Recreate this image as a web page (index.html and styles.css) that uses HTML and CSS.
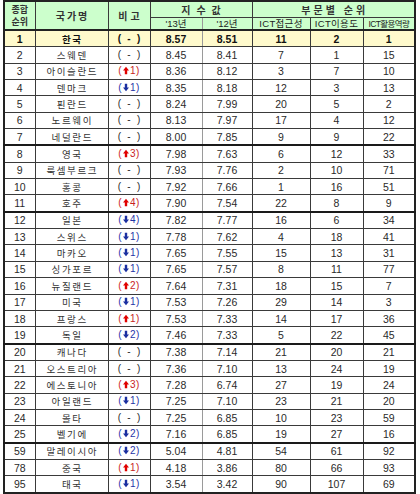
FILE: index.html
```html
<!DOCTYPE html>
<html lang="ko">
<head>
<meta charset="utf-8">
<title>ICT 발전지수 순위</title>
<link rel="stylesheet" href="styles.css">
</head>
<body>
<div class="wrap">
<table class="rank">
<colgroup>
<col class="w-rank"><col class="w-name"><col class="w-note"><col class="w-13"><col class="w-12"><col class="w-a"><col class="w-b"><col class="w-c">
</colgroup>
<thead>
<tr class="h1">
<th rowspan="2" class="hr"><div class="two">종합</div><div class="two">순위</div></th>
<th rowspan="2" class="hn">국가명</th>
<th rowspan="2" class="hb">비고</th>
<th colspan="2" class="hx">지수값</th>
<th colspan="3" class="hs">부문별 순위</th>
</tr>
<tr class="h2">
<th class="sub c13">'13년</th>
<th class="sub">'12년</th>
<th class="sub ict">ICT접근성</th>
<th class="sub ict">ICT이용도</th>
<th class="sub ict sq">ICT활용역량</th>
</tr>
</thead>
<tbody>
<tr class="top"><td>1</td><td class="nm">한국</td><td class="nt eq">( - )</td><td class="c13">8.57</td><td>8.51</td><td>11</td><td>2</td><td>1</td></tr>
<tr><td>2</td><td class="nm">스웨덴</td><td class="nt eq">( - )</td><td class="c13">8.45</td><td>8.41</td><td>7</td><td>1</td><td>15</td></tr>
<tr><td>3</td><td class="nm">아이슬란드</td><td class="nt up">(<svg class="ar" viewBox="0 0 8 10"><path d="M4 0L8 5H5.6V10H2.4V5H0Z"/></svg>1)</td><td class="c13">8.36</td><td>8.12</td><td>3</td><td>7</td><td>10</td></tr>
<tr><td>4</td><td class="nm">덴마크</td><td class="nt dn">(<svg class="ar" viewBox="0 0 8 10"><path d="M4 10L8 5H5.6V0H2.4V5H0Z"/></svg>1)</td><td class="c13">8.35</td><td>8.18</td><td>12</td><td>3</td><td>13</td></tr>
<tr><td>5</td><td class="nm">핀란드</td><td class="nt eq">( - )</td><td class="c13">8.24</td><td>7.99</td><td>20</td><td>5</td><td>2</td></tr>
<tr><td>6</td><td class="nm">노르웨이</td><td class="nt eq">( - )</td><td class="c13">8.13</td><td>7.97</td><td>17</td><td>4</td><td>12</td></tr>
<tr class="sep"><td>7</td><td class="nm">네덜란드</td><td class="nt eq">( - )</td><td class="c13">8.00</td><td>7.85</td><td>9</td><td>9</td><td>22</td></tr>
<tr><td>8</td><td class="nm">영국</td><td class="nt up">(<svg class="ar" viewBox="0 0 8 10"><path d="M4 0L8 5H5.6V10H2.4V5H0Z"/></svg>3)</td><td class="c13">7.98</td><td>7.63</td><td>6</td><td>12</td><td>33</td></tr>
<tr><td>9</td><td class="nm">룩셈부르크</td><td class="nt eq">( - )</td><td class="c13">7.93</td><td>7.76</td><td>2</td><td>10</td><td>71</td></tr>
<tr><td>10</td><td class="nm">홍콩</td><td class="nt eq">( - )</td><td class="c13">7.92</td><td>7.66</td><td>1</td><td>16</td><td>51</td></tr>
<tr class="sep"><td>11</td><td class="nm">호주</td><td class="nt up">(<svg class="ar" viewBox="0 0 8 10"><path d="M4 0L8 5H5.6V10H2.4V5H0Z"/></svg>4)</td><td class="c13">7.90</td><td>7.54</td><td>22</td><td>8</td><td>9</td></tr>
<tr><td>12</td><td class="nm">일본</td><td class="nt dn">(<svg class="ar" viewBox="0 0 8 10"><path d="M4 10L8 5H5.6V0H2.4V5H0Z"/></svg>4)</td><td class="c13">7.82</td><td>7.77</td><td>16</td><td>6</td><td>34</td></tr>
<tr><td>13</td><td class="nm">스위스</td><td class="nt dn">(<svg class="ar" viewBox="0 0 8 10"><path d="M4 10L8 5H5.6V0H2.4V5H0Z"/></svg>1)</td><td class="c13">7.78</td><td>7.62</td><td>4</td><td>18</td><td>41</td></tr>
<tr><td>14</td><td class="nm">마카오</td><td class="nt dn">(<svg class="ar" viewBox="0 0 8 10"><path d="M4 10L8 5H5.6V0H2.4V5H0Z"/></svg>1)</td><td class="c13">7.65</td><td>7.55</td><td>15</td><td>13</td><td>31</td></tr>
<tr><td>15</td><td class="nm">싱가포르</td><td class="nt dn">(<svg class="ar" viewBox="0 0 8 10"><path d="M4 10L8 5H5.6V0H2.4V5H0Z"/></svg>1)</td><td class="c13">7.65</td><td>7.57</td><td>8</td><td>11</td><td>77</td></tr>
<tr><td>16</td><td class="nm">뉴질랜드</td><td class="nt up">(<svg class="ar" viewBox="0 0 8 10"><path d="M4 0L8 5H5.6V10H2.4V5H0Z"/></svg>2)</td><td class="c13">7.64</td><td>7.31</td><td>18</td><td>15</td><td>7</td></tr>
<tr><td>17</td><td class="nm">미국</td><td class="nt dn">(<svg class="ar" viewBox="0 0 8 10"><path d="M4 10L8 5H5.6V0H2.4V5H0Z"/></svg>1)</td><td class="c13">7.53</td><td>7.26</td><td>29</td><td>14</td><td>3</td></tr>
<tr><td>18</td><td class="nm">프랑스</td><td class="nt up">(<svg class="ar" viewBox="0 0 8 10"><path d="M4 0L8 5H5.6V10H2.4V5H0Z"/></svg>1)</td><td class="c13">7.53</td><td>7.33</td><td>14</td><td>17</td><td>36</td></tr>
<tr class="sep"><td>19</td><td class="nm">독일</td><td class="nt dn">(<svg class="ar" viewBox="0 0 8 10"><path d="M4 10L8 5H5.6V0H2.4V5H0Z"/></svg>2)</td><td class="c13">7.46</td><td>7.33</td><td>5</td><td>22</td><td>45</td></tr>
<tr><td>20</td><td class="nm">캐나다</td><td class="nt eq">( - )</td><td class="c13">7.38</td><td>7.14</td><td>21</td><td>20</td><td>21</td></tr>
<tr><td>21</td><td class="nm">오스트리아</td><td class="nt eq">( - )</td><td class="c13">7.36</td><td>7.10</td><td>13</td><td>24</td><td>19</td></tr>
<tr><td>22</td><td class="nm">에스토니아</td><td class="nt up">(<svg class="ar" viewBox="0 0 8 10"><path d="M4 0L8 5H5.6V10H2.4V5H0Z"/></svg>3)</td><td class="c13">7.28</td><td>6.74</td><td>27</td><td>19</td><td>24</td></tr>
<tr><td>23</td><td class="nm">아일랜드</td><td class="nt dn">(<svg class="ar" viewBox="0 0 8 10"><path d="M4 10L8 5H5.6V0H2.4V5H0Z"/></svg>1)</td><td class="c13">7.25</td><td>7.10</td><td>23</td><td>21</td><td>20</td></tr>
<tr><td>24</td><td class="nm">몰타</td><td class="nt eq">( - )</td><td class="c13">7.25</td><td>6.85</td><td>10</td><td>23</td><td>59</td></tr>
<tr class="sep"><td>25</td><td class="nm">벨기에</td><td class="nt dn">(<svg class="ar" viewBox="0 0 8 10"><path d="M4 10L8 5H5.6V0H2.4V5H0Z"/></svg>2)</td><td class="c13">7.16</td><td>6.85</td><td>19</td><td>27</td><td>16</td></tr>
<tr><td>59</td><td class="nm">말레이시아</td><td class="nt dn">(<svg class="ar" viewBox="0 0 8 10"><path d="M4 10L8 5H5.6V0H2.4V5H0Z"/></svg>2)</td><td class="c13">5.04</td><td>4.81</td><td>54</td><td>61</td><td>92</td></tr>
<tr><td>78</td><td class="nm">중국</td><td class="nt up">(<svg class="ar" viewBox="0 0 8 10"><path d="M4 0L8 5H5.6V10H2.4V5H0Z"/></svg>1)</td><td class="c13">4.18</td><td>3.86</td><td>80</td><td>66</td><td>93</td></tr>
<tr><td>95</td><td class="nm">태국</td><td class="nt dn">(<svg class="ar" viewBox="0 0 8 10"><path d="M4 10L8 5H5.6V0H2.4V5H0Z"/></svg>1)</td><td class="c13">3.54</td><td>3.42</td><td>90</td><td>107</td><td>69</td></tr>
</tbody>
</table>
</div>
</body>
</html>
```

FILE: styles.css
```css
html, body {
  margin: 0;
  padding: 0;
  background: #ffffff;
}
body {
  font-family: "Liberation Sans", "Noto Sans CJK KR", sans-serif;
  color: #333333;
}
.wrap {
  padding: 0 0 0 3px;
}
.rank {
  border-collapse: collapse;
  table-layout: fixed;
  width: 413px;
  border: 2px solid #222222;
}
.w-rank { width: 31px; }
.w-name { width: 73px; }
.w-note { width: 42px; }
.w-13 { width: 52px; }
.w-12 { width: 50px; }
.w-a { width: 58px; }
.w-b { width: 53px; }
.w-c { width: 52px; }

.rank th, .rank td {
  border: 1px solid #3a3a3a;
  padding: 0;
  text-align: center;
  vertical-align: middle;
  white-space: nowrap;
  overflow: hidden;
}
.rank th {
  background: #ccffcc;
  font-family: "Noto Sans CJK KR", "Liberation Sans", sans-serif;
  font-weight: bold;
  color: #333333;
}
.h1 th {
  height: 15px;
  font-size: 10px;
  line-height: 12px;
}
.h2 th {
  height: 11px;
  font-size: 9.5px;
  line-height: 10px;
  border-bottom: 2px solid #222222;
}
.rank th.hr {
  font-size: 9px;
  line-height: 12px;
  border-bottom: 2px solid #222222;
}
.two {
  height: 12px;
  line-height: 12px;
  overflow: hidden;
}
.rank th.hn {
  letter-spacing: 2px;
  padding-left: 2px;
  border-bottom: 2px solid #222222;
}
.rank th.hb {
  letter-spacing: 3px;
  padding-left: 3px;
  border-bottom: 2px solid #222222;
}
.rank th.hx {
  letter-spacing: 6px;
  padding-left: 6px;
}
.rank th.hs {
  letter-spacing: 3px;
  padding-left: 3px;
}
.rank th.sub {
  font-family: "Liberation Sans", "Noto Sans CJK KR", sans-serif;
  font-weight: normal;
  color: #222222;
}
.rank th.ict {
  letter-spacing: 0.3px;
}
.rank th.sq {
  font-size: 8.5px;
  letter-spacing: -0.6px;
}
.rank .c13 {
  border-right: 1px solid #9a9a9a;
}
.rank td {
  height: 15.35px;
  font-size: 10.5px;
  line-height: 12px;
  color: #2a2a2a;
}
.rank td.nm {
  font-family: "Noto Sans CJK KR", "Liberation Sans", sans-serif;
  font-size: 9.5px;
  letter-spacing: 1.6px;
  padding-left: 1.6px;
  color: #333333;
}
.rank td.nt {
  font-size: 10px;
  letter-spacing: 0.5px;
}
.rank td.nt.eq {
  letter-spacing: 1.8px;
  padding-left: 1.8px;
}
.rank td.nt.up { color: #c81e1e; }
.rank td.nt.dn { color: #1f35a8; }
.ar {
  width: 6px;
  height: 9px;
  vertical-align: -1px;
  margin: 0 1px 0 1px;
}
.up .ar path { fill: #e00000; }
.dn .ar path { fill: #1a2fa0; }

.rank tr.top td {
  background: #fffacc;
  font-weight: bold;
  color: #111111;
}
.rank tr.sep td {
  border-bottom: 2px solid #1a1a1a;
}
```
